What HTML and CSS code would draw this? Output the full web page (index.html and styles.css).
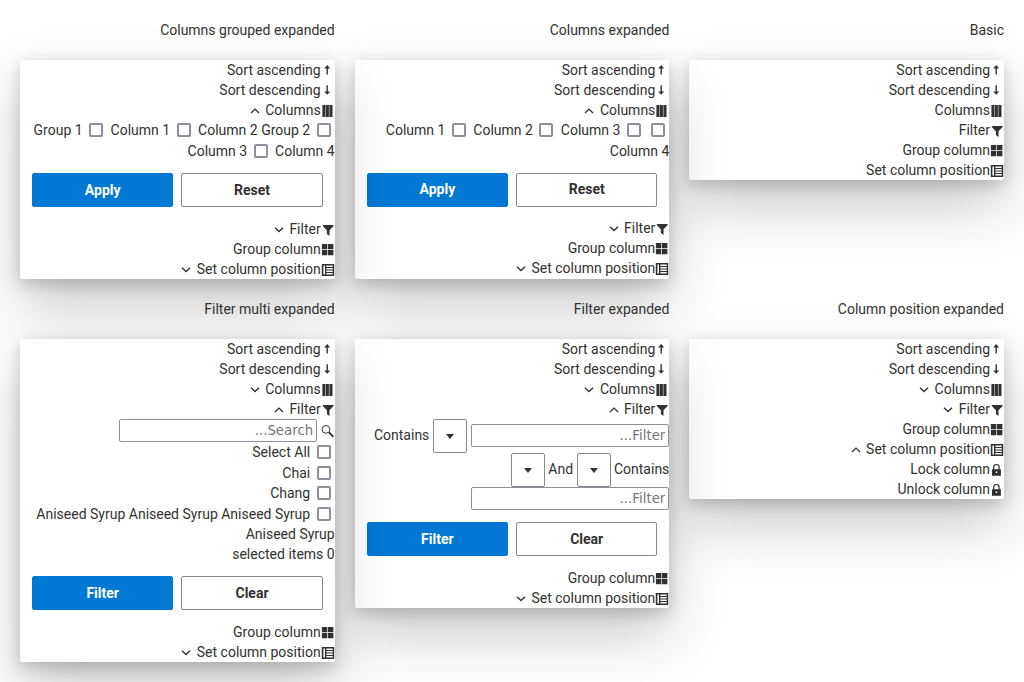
FILE: index.html
```html
<!DOCTYPE html>
<html lang="en" dir="rtl">
<head>
<meta charset="utf-8">
<title>Column menu</title>
<link rel="stylesheet" href="styles.css">
</head>
<body>
<svg class="sprite" aria-hidden="true">
  <symbol id="up" viewBox="0.6 0 14 14"><path d="M6.1 5.4H3.8L6.8 2.1 9.8 5.4H7.5V11.5H6.1z"/></symbol>
  <symbol id="down" viewBox="0.6 0 14 14"><path d="M6.1 8.4H3.8L6.8 11.7 9.8 8.4H7.5V2.3H6.1z"/></symbol>
  <symbol id="cols" viewBox="0.4 0 14 14"><path d="M1.8 2H4.9V14H1.8zM5.4 2H8.3V14H5.4zM8.8 2H11.9V14H8.8z"/></symbol>
  <symbol id="funnel" viewBox="0.4 0 14 14"><path d="M2.2 3H13V4L8.9 8.3V13.9L6.3 11.9V8.3L2.2 4z"/></symbol>
  <symbol id="grid" viewBox="0.4 0 14 14"><path d="M1.3 2H6.6V7.2H1.3zM7.3 2H12.8V7.2H7.3zM1.3 7.9H6.6V13.2H1.3zM7.3 7.9H12.8V13.2H7.3z"/></symbol>
  <symbol id="pos" viewBox="0.4 0 14 14"><path fill-rule="evenodd" d="M1.2 2H13.6V14H1.2zM2.8 3.5V12.5H4.4V3.5zM5.8 3.5V4.9H12.1V3.5zM5.8 5.9V7.4H12.1V5.9zM5.8 8.4V9.9H12.1V8.4zM5.8 10.9V12.5H12.1V10.9z"/></symbol>
  <symbol id="lock" viewBox="0.4 0 14 14"><path fill-rule="evenodd" d="M2.4 7.2H3.5V5.2A3.3 3.3 0 0 1 10.1 5.2V7.2H11.3V13.8H2.4zM4.7 7.2H8.9V5.2A2.1 2.1 0 0 0 4.7 5.2zM6.1 9.5V11.1H7.6V9.5z"/></symbol>
  <symbol id="cdown" viewBox="0 0 14 14"><path class="line" d="M3 5.8L7 9.6 11 5.8"/></symbol>
  <symbol id="cup" viewBox="0 0 14 14"><path class="line" d="M3 9.9L7 6.1 11 9.9"/></symbol>
  <symbol id="search" viewBox="0 0 14 14"><circle class="thin" cx="5" cy="5.4" r="3.9"/><path class="handle" d="M7.8 8.2L12.4 12.8"/></symbol>
</svg>
<main class="board">
  <section><h2>Basic</h2>
    <div class="card">
      <div class="item"><svg><use href="#up"/></svg>Sort ascending</div>
      <div class="item"><svg><use href="#down"/></svg>Sort descending</div>
      <div class="item"><svg><use href="#cols"/></svg>Columns</div>
      <div class="item"><svg><use href="#funnel"/></svg>Filter</div>
      <div class="item"><svg><use href="#grid"/></svg>Group column</div>
      <div class="item"><svg><use href="#pos"/></svg>Set column position</div>
    </div>
  </section>
  <section><h2>Columns expanded</h2>
    <div class="card">
      <div class="item"><svg><use href="#up"/></svg>Sort ascending</div>
      <div class="item"><svg><use href="#down"/></svg>Sort descending</div>
      <div class="item"><svg><use href="#cols"/></svg>Columns<svg class="exp"><use href="#cup"/></svg></div>
      <div class="checks flat"><div class="cl"><input type="checkbox"> Column 1 <input type="checkbox"> Column 2 <input type="checkbox"> Column 3 <input type="checkbox"> Column 4</div></div>
      <div class="actions raised"><button class="primary">Apply</button><button>Reset</button></div>
      <div class="item raised"><svg><use href="#funnel"/></svg>Filter<svg class="exp"><use href="#cdown"/></svg></div>
      <div class="item raised"><svg><use href="#grid"/></svg>Group column</div>
      <div class="item raised"><svg><use href="#pos"/></svg>Set column position<svg class="exp"><use href="#cdown"/></svg></div>
    </div>
  </section>
  <section><h2>Columns grouped expanded</h2>
    <div class="card">
      <div class="item"><svg><use href="#up"/></svg>Sort ascending</div>
      <div class="item"><svg><use href="#down"/></svg>Sort descending</div>
      <div class="item"><svg><use href="#cols"/></svg>Columns<svg class="exp"><use href="#cup"/></svg></div>
      <div class="checks"><div class="cl"><input type="checkbox"> Group 1 <input type="checkbox"> Column 1 <input type="checkbox"> Column 2 Group 2 Column 3 <input type="checkbox"> Column 4</div></div>
      <div class="actions"><button class="primary">Apply</button><button>Reset</button></div>
      <div class="item"><svg><use href="#funnel"/></svg>Filter<svg class="exp"><use href="#cdown"/></svg></div>
      <div class="item"><svg><use href="#grid"/></svg>Group column</div>
      <div class="item"><svg><use href="#pos"/></svg>Set column position<svg class="exp"><use href="#cdown"/></svg></div>
    </div>
  </section>
  <section><h2>Column position expanded</h2>
    <div class="card">
      <div class="item"><svg><use href="#up"/></svg>Sort ascending</div>
      <div class="item"><svg><use href="#down"/></svg>Sort descending</div>
      <div class="item"><svg><use href="#cols"/></svg>Columns<svg class="exp"><use href="#cdown"/></svg></div>
      <div class="item"><svg><use href="#funnel"/></svg>Filter<svg class="exp"><use href="#cdown"/></svg></div>
      <div class="item"><svg><use href="#grid"/></svg>Group column</div>
      <div class="item"><svg><use href="#pos"/></svg>Set column position<svg class="exp"><use href="#cup"/></svg></div>
      <div class="item"><svg><use href="#lock"/></svg>Lock column</div>
      <div class="item"><svg><use href="#lock"/></svg>Unlock column</div>
    </div>
  </section>
  <section><h2>Filter expanded</h2>
    <div class="card">
      <div class="item"><svg><use href="#up"/></svg>Sort ascending</div>
      <div class="item"><svg><use href="#down"/></svg>Sort descending</div>
      <div class="item"><svg><use href="#cols"/></svg>Columns<svg class="exp"><use href="#cdown"/></svg></div>
      <div class="item"><svg><use href="#funnel"/></svg>Filter<svg class="exp"><use href="#cup"/></svg></div>
      <div class="criteria first"><input class="field" type="text" placeholder="Filter..."><button class="drop"><i class="caret"></i></button><span>Contains</span></div>
      <div class="criteria second"><span>Contains</span><button class="drop"><i class="caret"></i></button><span>And</span><button class="drop"><i class="caret"></i></button></div>
      <div class="criteria"><input class="field" type="text" placeholder="Filter..."></div>
      <div class="actions"><button class="primary">Filter</button><button>Clear</button></div>
      <div class="item"><svg><use href="#grid"/></svg>Group column</div>
      <div class="item"><svg><use href="#pos"/></svg>Set column position<svg class="exp"><use href="#cdown"/></svg></div>
    </div>
  </section>
  <section><h2>Filter multi expanded</h2>
    <div class="card">
      <div class="item"><svg><use href="#up"/></svg>Sort ascending</div>
      <div class="item"><svg><use href="#down"/></svg>Sort descending</div>
      <div class="item"><svg><use href="#cols"/></svg>Columns<svg class="exp"><use href="#cdown"/></svg></div>
      <div class="item"><svg><use href="#funnel"/></svg>Filter<svg class="exp"><use href="#cup"/></svg></div>
      <div class="criteria"><svg><use href="#search"/></svg><input class="field" type="text" placeholder="Search..."></div>
      <div class="checks">
        <div class="cl"><input type="checkbox"> Select All</div>
        <div class="cl"><input type="checkbox"> Chai</div>
        <div class="cl"><input type="checkbox"> Chang</div>
        <div class="cl"><input type="checkbox"> Aniseed Syrup Aniseed Syrup Aniseed Syrup Aniseed Syrup</div>
      </div>
      <div class="item">0 selected items</div>
      <div class="actions"><button class="primary">Filter</button><button>Clear</button></div>
      <div class="item"><svg><use href="#grid"/></svg>Group column</div>
      <div class="item"><svg><use href="#pos"/></svg>Set column position<svg class="exp"><use href="#cdown"/></svg></div>
    </div>
  </section>
</main>
</body>
</html>
```
FILE: styles.css
```css
* { box-sizing: border-box; }
html { overflow: hidden; }
body {
  margin: 0;
  background: #fff;
  color: #323130;
  font: 14px/20px Roboto, sans-serif;
}
.sprite { position: absolute; width: 0; height: 0; }
.board {
  display: grid;
  grid-template-columns: repeat(3, minmax(0, 1fr));
  gap: 20px;
  padding: 20px;
  align-items: start;
}
h2 { margin: 0 0 20px; font: inherit; }
.card {
  background: #fff;
  border-radius: 2px;
  box-shadow: 0 25.6px 57.6px rgba(0, 0, 0, .22), 0 4.8px 14.4px rgba(0, 0, 0, .18);
}
/* Cards paint in document order so each shadow falls over its earlier neighbour. */
section { position: relative; }
.item { display: flex; align-items: center; height: 20px; }
.item.raised { padding-bottom: 1px; }
.actions.raised button { padding-bottom: 2px; }
svg { flex: none; width: 14px; height: 14px; fill: currentColor; }
.exp { margin-right: 3.5px; }
.line { fill: none; stroke: currentColor; stroke-width: 1.4; }
.thin { fill: none; stroke: currentColor; stroke-width: 1; }
.handle { fill: none; stroke: currentColor; stroke-width: 1.8; }
input[type="checkbox"] {
  appearance: none;
  width: 14px;
  height: 14px;
  margin: 3px 4px 3.5px 3px;
  border: 2px solid #8f8f9d;
  border-radius: 2px;
  background: #fff;
  vertical-align: -5.5px;
}
.actions { display: flex; direction: ltr; gap: 8px; padding: 12px; }
button {
  flex: 1;
  height: 34px;
  padding: 0;
  border: 1px solid #8a8886;
  border-radius: 2px;
  background: #fff;
  color: #323130;
  font: 700 14px/20px Roboto, sans-serif;
}
.primary { background: #0078d4; border-color: #0078d4; color: #fff; }
.criteria { display: flex; align-items: center; gap: 3.5px; }
.criteria span { padding-bottom: 2px; }
.first { gap: 4px; }
.first .field { margin-bottom: 1px; }
.second { gap: 3.3px; }
.second span + button + span { margin-right: .3px; }
.field {
  width: 198px;
  height: 23px;
  padding: 1px 3px;
  border: 1px solid #8f8f9d;
  border-radius: 2px;
  background: #fff;
  font: 13.333px/19px "DejaVu Sans", sans-serif;
}
.field::placeholder { color: #757575; opacity: 1; }
.drop { flex: none; display: flex; align-items: center; justify-content: center; width: 34px; }
.caret {
  border: solid transparent;
  border-width: 5.5px 4px 0;
  border-top-color: #323130;
}
```
